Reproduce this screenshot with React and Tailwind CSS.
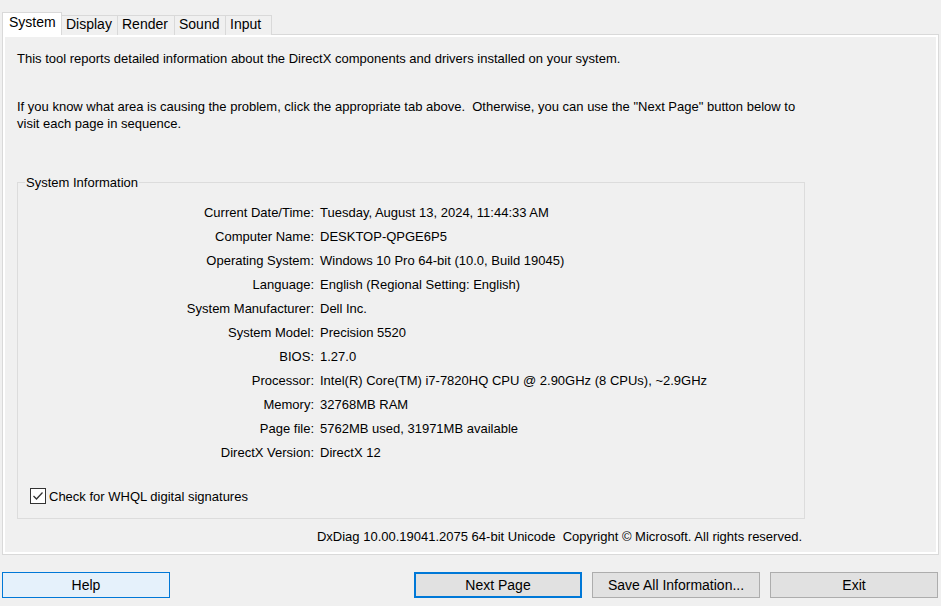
import React from "react";

const rows = [
  ["Current Date/Time:", "Tuesday, August 13, 2024, 11:44:33 AM"],
  ["Computer Name:", "DESKTOP-QPGE6P5"],
  ["Operating System:", "Windows 10 Pro 64-bit (10.0, Build 19045)"],
  ["Language:", "English (Regional Setting: English)"],
  ["System Manufacturer:", "Dell Inc."],
  ["System Model:", "Precision 5520"],
  ["BIOS:", "1.27.0"],
  ["Processor:", "Intel(R) Core(TM) i7-7820HQ CPU @ 2.90GHz (8 CPUs), ~2.9GHz"],
  ["Memory:", "32768MB RAM"],
  ["Page file:", "5762MB used, 31971MB available"],
  ["DirectX Version:", "DirectX 12"],
];

const tabs = [
  ["Display", "w-[56px]"],
  ["Render", "w-[57px]"],
  ["Sound", "w-[51px]"],
  ["Input", "w-[46px]"],
];

export default function App() {
  return (
    <div
      className="w-[941px] h-[606px] bg-[#f0f0f0] text-[13px] text-black overflow-hidden"
      style={{ fontFamily: '"Liberation Sans", Arial, sans-serif' }}
    >
      <div className="flex items-end pl-[2px] pt-[12px] h-[35px] relative z-10">
        <div className="h-[23px] w-[60px] bg-white border border-[#d9d9d9] border-b-0 pt-[1px] pl-[6px] text-[14px] leading-[17px]">
          System
        </div>
        {tabs.map(([t, w]) => (
          <div
            key={t}
            className={`${w} h-[20px] border border-[#d9d9d9] border-l-0 border-b-0 bg-[#f0f0f0] pl-[4px] text-[14px] leading-[17px]`}
          >
            {t}
          </div>
        ))}
      </div>
      <div className="ml-[2px] w-[937px] h-[521px] -mt-px border border-[#d9d9d9]">
        <div className="h-full border-2 border-white pl-[12px] pt-[13px] leading-[17px]">
          <p>This tool reports detailed information about the DirectX components and drivers installed on your system.</p>
          <p className="mt-[31px] w-[790px]">
            If you know what area is causing the problem, click the appropriate tab above.&nbsp; Otherwise, you can use the "Next Page" button below to visit each page in sequence.
          </p>
          <div className="relative mt-[50px] w-[788px] h-[337px] border border-[#dcdcdc]">
            <span className="absolute -top-[9px] left-[7px] bg-[#f0f0f0] px-[1px]">System Information</span>
            <div className="pt-[17px] grid grid-cols-[296px_1fr] gap-x-[6px]">
              {rows.map(([k, v]) => (
                <React.Fragment key={k}>
                  <div className="h-[24px] flex items-center justify-end">{k}</div>
                  <div className="h-[24px] flex items-center">{v}</div>
                </React.Fragment>
              ))}
            </div>
            <div className="mt-[24px] pl-[12px] flex items-center h-[16px]">
              <div className="w-[16px] h-[16px] border border-[#333333] bg-white flex items-center justify-center">
                <svg width="12" height="10" viewBox="0 0 12 10">
                  <polyline points="1.5,5 4.5,8 10.5,1.5" fill="none" stroke="#333" strokeWidth="1.3" />
                </svg>
              </div>
              <span className="ml-[3px]">Check for WHQL digital signatures</span>
            </div>
          </div>
          <div className="mt-[9px] pr-[134px] text-right">
            DxDiag 10.00.19041.2075 64-bit Unicode&nbsp; Copyright © Microsoft. All rights reserved.
          </div>
        </div>
      </div>
      <div className="mt-[17px] flex items-center pl-[2px] text-[14px]">
        <button className="w-[168px] h-[26px] bg-[#e5f1fb] border border-[#0078d7]">Help</button>
        <div className="flex-1" />
        <div className="flex gap-[10px] pr-[3px]">
          <button className="w-[168px] h-[26px] bg-[#e1e1e1] border-2 border-[#0078d7]">Next Page</button>
          <button className="w-[168px] h-[26px] bg-[#e1e1e1] border border-[#adadad]">Save All Information...</button>
          <button className="w-[168px] h-[26px] bg-[#e1e1e1] border border-[#adadad]">Exit</button>
        </div>
      </div>
    </div>
  );
}
